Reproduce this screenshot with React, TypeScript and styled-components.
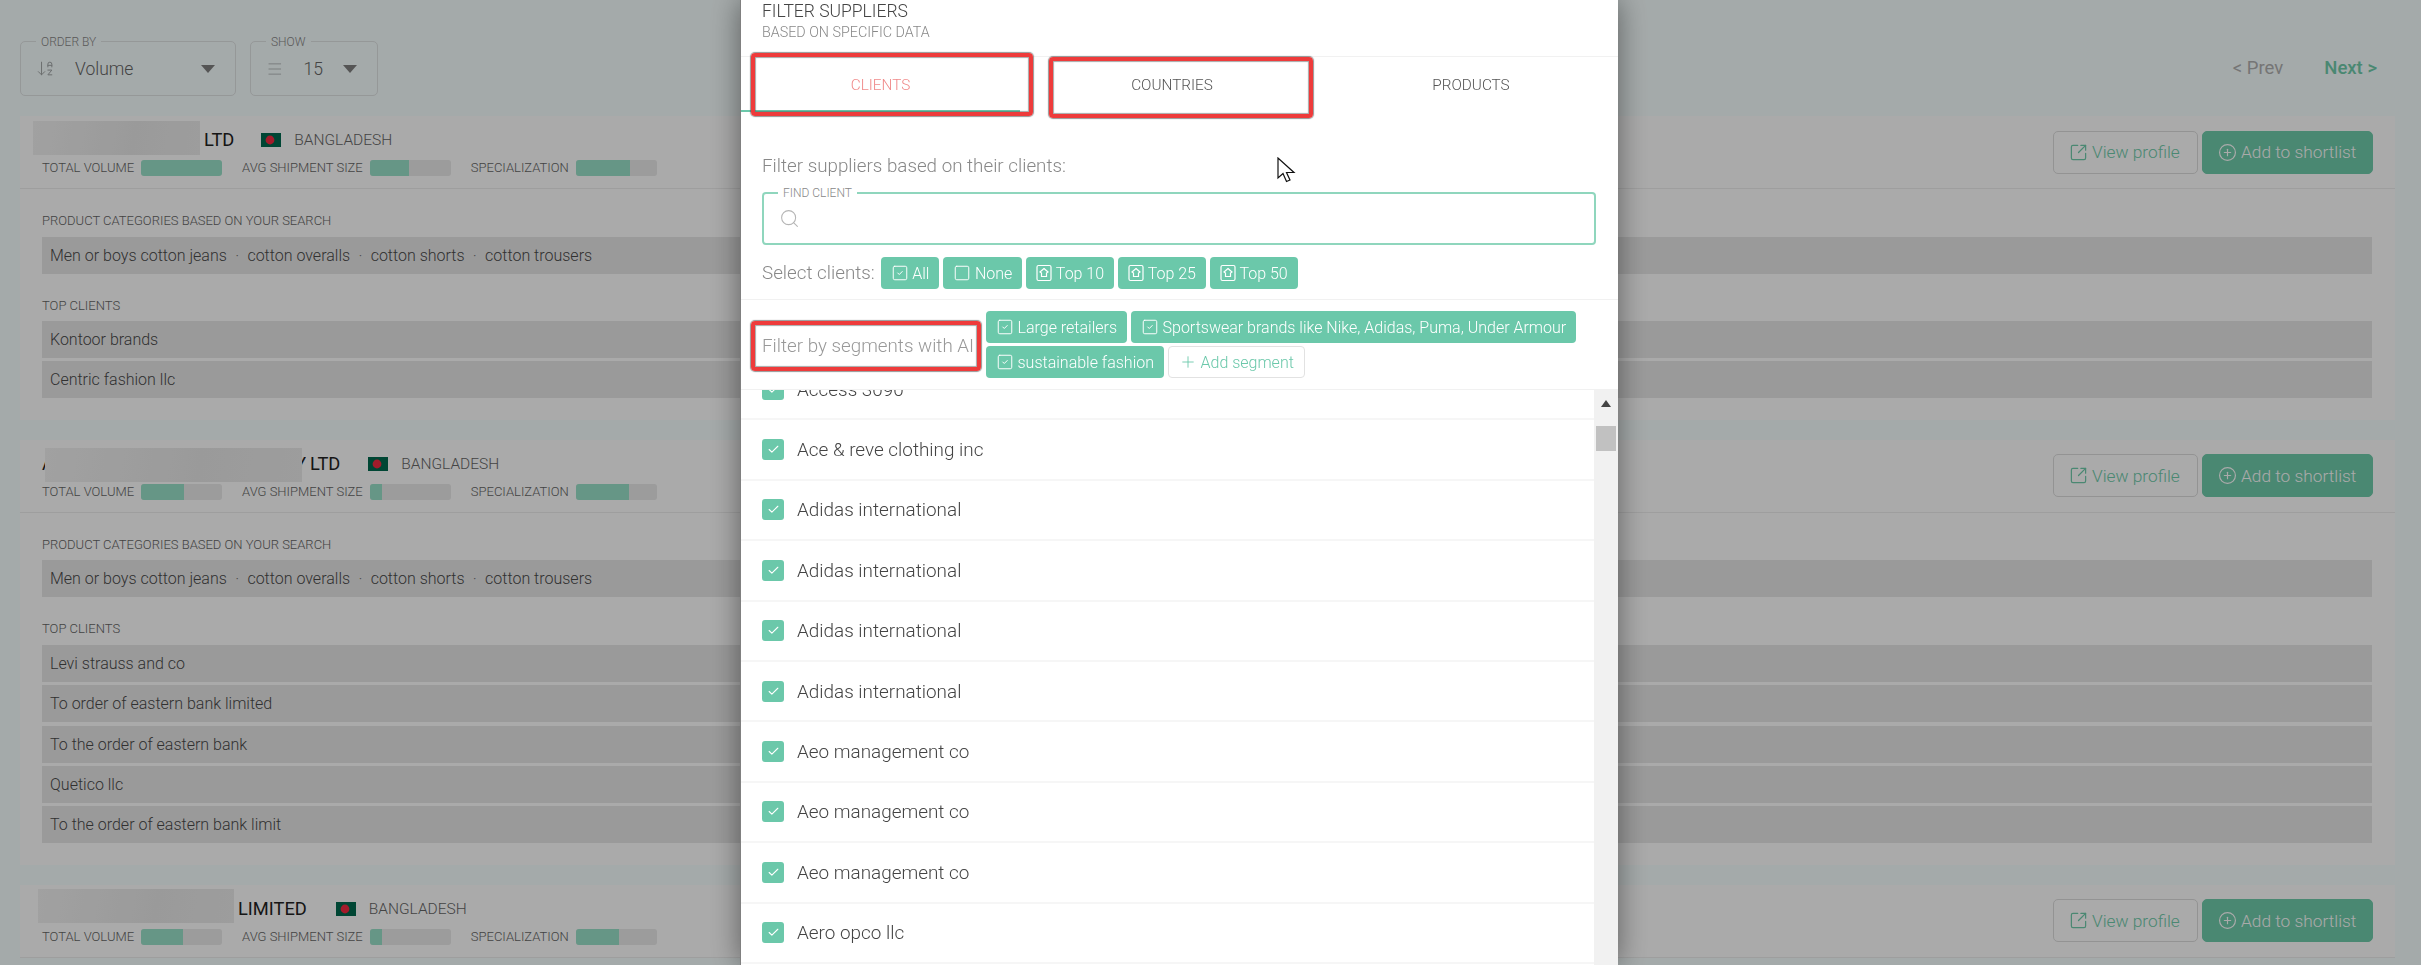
// App.tsx
import React from "react";
import styled, { createGlobalStyle } from "styled-components";
import { ArrowDownAZ, Check, CirclePlus, Menu, Plus, Search, Square, SquareArrowOutUpRight, SquareCheck } from "lucide-react";

interface supplierProps {
  blur: { left: number; width: number; top: number };
  before?: string;
  after?: string;
  suffix: string;
  gap: number;
  bars: number[];
  categories?: boolean;
  clients: string[];
}

const suppliers: supplierProps[] = [
  {
    blur: { left: 13, width: 167, top: -2 },
    suffix: "LTD",
    gap: 27,
    bars: [100, 48, 67],
    categories: true,
    clients: ["Kontoor brands", "Centric fashion llc"],
  },
  {
    blur: { left: 3, width: 257, top: 1 },
    before: "A",
    after: "Y",
    suffix: "LTD",
    gap: 28,
    bars: [53, 15, 66],
    categories: true,
    clients: [
      "Levi strauss and co",
      "To order of eastern bank limited",
      "To the order of eastern bank",
      "Quetico llc",
      "To the order of eastern bank limit",
    ],
  },
  {
    blur: { left: 18, width: 196, top: -3 },
    suffix: "LIMITED",
    gap: 29,
    bars: [52, 15, 53],
    clients: [],
  },
];

const metricNames = ["TOTAL VOLUME", "AVG SHIPMENT SIZE", "SPECIALIZATION"];
const clientList = [
  "Access 3090",
  "Ace & reve clothing inc",
  "Adidas international",
  "Adidas international",
  "Adidas international",
  "Adidas international",
  "Aeo management co",
  "Aeo management co",
  "Aeo management co",
  "Aero opco llc",
];

const TopIcon = () => (
  <svg width="16" height="18" viewBox="0 0 16 18" fill="none" stroke="currentColor" strokeWidth="1.2">
    <rect x="1" y="1.5" width="14" height="15" rx="1.5" />
    <path d="M8 4.5 L12 8 L10.5 9 V12.5 H5.5 V9 L4 8 Z" />
  </svg>
);

const Flag = () => (
  <svg width="20" height="14" viewBox="0 0 20 14">
    <rect width="20" height="14" fill="#006a4e" />
    <circle cx="9" cy="7" r="4.4" fill="#f42a41" />
  </svg>
);

const SupplierCard = ({ supplier }: { supplier: supplierProps }) => (
  <Card>
    <CardHeader>
      <div>
        <NameRow>
          <Redacted $left={supplier.before ? 0 : supplier.blur.left}>
            {supplier.before && <LeftGlyph>{supplier.before}</LeftGlyph>}
            <RedactBlock $width={supplier.blur.width} $top={supplier.blur.top} />
            {supplier.after && <RightGlyph>{supplier.after}</RightGlyph>}
          </Redacted>
          <CompanyName>{supplier.suffix}</CompanyName>
          <FlagWrap $gap={supplier.gap}>
            <Flag />
          </FlagWrap>
          <Country>BANGLADESH</Country>
        </NameRow>
        <MetricRow>
          {metricNames.map((name, index) => (
            <Metric key={name}>
              <MetricName>{name}</MetricName>
              <Bar>
                <BarFill style={{ width: `${supplier.bars[index]}%` }} />
              </Bar>
            </Metric>
          ))}
        </MetricRow>
      </div>
      <Actions>
        <OutlineButton>
          <SquareArrowOutUpRight size={19} strokeWidth={1.5} />
          View profile
        </OutlineButton>
        <PrimaryButton>
          <CirclePlus size={19} strokeWidth={1.5} />
          Add to shortlist
        </PrimaryButton>
      </Actions>
    </CardHeader>
    {supplier.categories && (
      <CardBody>
        <SectionLabel>PRODUCT CATEGORIES BASED ON YOUR SEARCH</SectionLabel>
        <GreyRow>
          Men or boys cotton jeans<Dot>·</Dot>cotton overalls<Dot>·</Dot>cotton shorts<Dot>·</Dot>cotton trousers
        </GreyRow>
        <SectionLabel $spaced>TOP CLIENTS</SectionLabel>
        {supplier.clients.map((client, index) => (
          <GreyRow key={index}>{client}</GreyRow>
        ))}
      </CardBody>
    )}
  </Card>
);

const App = () => {
  return (
    <>
      <GlobalStyle />
      <Page>
        <Toolbar>
          <Field $width={216}>
            <FieldLabel>ORDER BY</FieldLabel>
            <ArrowDownAZ size={19} strokeWidth={1.25} color="#a0a5a6" />
            <FieldValue $grow>Volume</FieldValue>
            <Caret />
          </Field>
          <Field $width={128}>
            <FieldLabel>SHOW</FieldLabel>
            <Menu size={20} strokeWidth={1} color="#a0a5a6" />
            <FieldValue>15</FieldValue>
            <Caret />
          </Field>
          <Pager>
            <PagerLink>&lt; Prev</PagerLink>
            <PagerLink $active>Next &gt;</PagerLink>
          </Pager>
        </Toolbar>
        {suppliers.map((supplier, index) => (
          <SupplierCard key={index} supplier={supplier} />
        ))}
      </Page>
      <Backdrop />
      <Modal>
        <ModalHead>
          <ModalTitle>FILTER SUPPLIERS</ModalTitle>
          <ModalSubtitle>BASED ON SPECIFIC DATA</ModalSubtitle>
        </ModalHead>
        <Tabs>
          <Tab $active>CLIENTS</Tab>
          <Tab>COUNTRIES</Tab>
          <Tab>PRODUCTS</Tab>
        </Tabs>
        <FilterPanel>
          <PanelText>Filter suppliers based on their clients:</PanelText>
          <SearchBox>
            <SearchLabel>FIND CLIENT</SearchLabel>
            <Search size={21} strokeWidth={1.2} color="#b5b5b5" />
          </SearchBox>
          <ChipRow>
            <PanelText>Select clients:</PanelText>
            <Chip>
              <SquareCheck size={18} strokeWidth={1.3} />
              All
            </Chip>
            <Chip>
              <Square size={18} strokeWidth={1.3} />
              None
            </Chip>
            <Chip>
              <TopIcon />
              Top 10
            </Chip>
            <Chip>
              <TopIcon />
              Top 25
            </Chip>
            <Chip>
              <TopIcon />
              Top 50
            </Chip>
          </ChipRow>
        </FilterPanel>
        <SegmentPanel>
          <SegmentLabel>Filter by segments with AI</SegmentLabel>
          <SegmentChips>
            <Chip>
              <SquareCheck size={18} strokeWidth={1.3} />
              Large retailers
            </Chip>
            <Chip>
              <SquareCheck size={18} strokeWidth={1.3} />
              Sportswear brands like Nike, Adidas, Puma, Under Armour
            </Chip>
            <Chip>
              <SquareCheck size={18} strokeWidth={1.3} />
              sustainable fashion
            </Chip>
            <GhostChip>
              <Plus size={18} strokeWidth={1.2} />
              Add segment
            </GhostChip>
          </SegmentChips>
        </SegmentPanel>
        <ListArea>
          <ListClip>
            <ListInner>
              {clientList.map((client, index) => (
                <ClientRow key={index}>
                  <CheckBox>
                    <Check size={13} strokeWidth={2} />
                  </CheckBox>
                  {client}
                </ClientRow>
              ))}
            </ListInner>
          </ListClip>
          <ScrollTrack>
            <ScrollArrow />
            <ScrollThumb />
          </ScrollTrack>
        </ListArea>
      </Modal>
      <RedBox $left={751} $top={53} $width={282} $height={63} />
      <RedBox $left={1049} $top={57} $width={264} $height={61} />
      <RedBox $left={751} $top={321} $width={230} $height={50} />
      <Cursor width="20" height="28" viewBox="0 0 20 28">
        <path d="M1 1 L1 21 L6 16.5 L9.5 24.5 L13 23 L9.5 15.5 L17 15.5 Z" fill="#fff" stroke="#111" strokeWidth="1.2" />
      </Cursor>
    </>
  );
};

export default App;

const GlobalStyle = createGlobalStyle`
  html, body {
    margin: 0;
    height: 965px;
    overflow: hidden;
    background: #f7ffff;
    font-family: Roboto, "Liberation Sans", sans-serif;
    font-weight: 300;
  }
  * {
    box-sizing: border-box;
  }
`;

const Page = styled.div`
  padding: 41px 26px 0 20px;
  height: 965px;
  overflow: hidden;
`;

const Toolbar = styled.div`
  display: flex;
  gap: 14px;
  height: 55px;
  margin-bottom: 20px;
`;

const Field = styled.div<{ $width: number }>`
  position: relative;
  display: flex;
  align-items: center;
  gap: 20px;
  width: ${(props) => props.$width}px;
  padding: 0 20px 0 15px;
  border: 1px solid #e0e4e5;
  border-radius: 5px;
`;

const FieldLabel = styled.span`
  position: absolute;
  top: -7px;
  left: 15px;
  padding: 0 5px;
  background: #f7ffff;
  font-size: 12px;
  line-height: 14px;
  color: #888;
`;

const FieldValue = styled.span<{ $grow?: boolean }>`
  flex: ${(props) => (props.$grow ? 1 : "none")};
  font-size: 17.5px;
  color: #666;
`;

const Caret = styled.span`
  width: 0;
  height: 0;
  border-left: 7px solid transparent;
  border-right: 7px solid transparent;
  border-top: 8px solid #808080;
`;

const Pager = styled.div`
  display: flex;
  gap: 41px;
  margin-left: auto;
  padding: 16px 18px 0 0;
`;

const PagerLink = styled.span<{ $active?: boolean }>`
  font-size: 18.5px;
  line-height: 22px;
  font-weight: ${(props) => (props.$active ? 500 : 400)};
  color: ${(props) => (props.$active ? "#6fccab" : "#b0b0b0")};
`;

const Card = styled.section`
  background: #fff;
  margin-bottom: 20px;
`;

const CardHeader = styled.header`
  display: flex;
  justify-content: space-between;
  align-items: center;
  height: 73px;
  padding: 12px 22px 12px 0;
  border-bottom: 1px solid #eee;
`;

const NameRow = styled.div`
  display: flex;
  align-items: center;
  height: 24px;
`;

const Redacted = styled.div<{ $left: number }>`
  display: flex;
  align-items: center;
  height: 24px;
  margin-left: ${(props) => props.$left}px;
  margin-right: 4px;
  font-size: 18px;
  font-weight: 400;
  color: #222;
`;

const RedactBlock = styled.div<{ $width: number; $top: number }>`
  flex: none;
  width: ${(props) => props.$width}px;
  height: 34px;
  margin-top: ${(props) => props.$top * 2}px;
  background: linear-gradient(100deg, #f2f2f2, #e8e8e8 60%, #ececec);
`;

const LeftGlyph = styled.span`
  width: 25px;
  height: 24px;
  padding-left: 22px;
  line-height: 24px;
  overflow: hidden;
  white-space: nowrap;
`;

const RightGlyph = styled.span`
  display: flex;
  justify-content: flex-end;
  width: 4px;
  height: 24px;
  line-height: 24px;
  overflow: hidden;
`;

const CompanyName = styled.span`
  font-size: 18.3px;
  font-weight: 400;
  line-height: 24px;
  color: #222;
`;

const FlagWrap = styled.span<{ $gap: number }>`
  display: flex;
  margin-left: ${(props) => props.$gap}px;
  margin-right: 13px;
`;

const Country = styled.span`
  font-size: 15.5px;
  color: #666;
`;

const MetricRow = styled.div`
  display: flex;
  gap: 20px;
  margin-top: 8px;
  padding-left: 22px;
`;

const Metric = styled.div`
  display: flex;
  align-items: center;
  gap: 7px;
`;

const MetricName = styled.span`
  font-size: 13px;
  line-height: 16px;
  color: #666;
`;

const Bar = styled.div`
  width: 81px;
  height: 16px;
  border-radius: 3px;
  overflow: hidden;
  background: #eaeaea;
`;

const BarFill = styled.div`
  height: 100%;
  background: #99e1c9;
`;

const Actions = styled.div`
  display: flex;
  gap: 4px;
`;

const OutlineButton = styled.button`
  display: flex;
  align-items: center;
  gap: 4px;
  width: 145px;
  height: 43px;
  padding: 0 0 0 15px;
  border: 1px solid #ddd;
  border-radius: 5px;
  background: #fff;
  color: #6fccab;
  font: 300 17.3px Roboto, sans-serif;
`;

const PrimaryButton = styled(OutlineButton)`
  width: 171px;
  border-color: #6fccab;
  background: #6fccab;
  color: #fff;
`;

const CardBody = styled.div`
  padding: 24px 23px 18px 22px;
`;

const SectionLabel = styled.div<{ $spaced?: boolean }>`
  margin: ${(props) => (props.$spaced ? "24px" : "0")} 0 7.5px;
  font-size: 13px;
  line-height: 16px;
  color: #666;
`;

const GreyRow = styled.div`
  display: flex;
  align-items: center;
  height: 37px;
  margin-bottom: 3.4px;
  padding-left: 8px;
  background: #e8e8e8;
  font-size: 16px;
  color: #4a4a4a;
`;

const Dot = styled.span`
  margin: 0 8.3px;
  color: #777;
`;

const Backdrop = styled.div`
  position: fixed;
  inset: 0;
  background: rgba(0, 0, 0, 0.333);
`;

const Modal = styled.div`
  position: fixed;
  top: 0;
  left: 740px;
  display: flex;
  flex-direction: column;
  width: 878px;
  height: 965px;
  overflow: hidden;
  background: #fff;
  border-left: 1px solid #808080;
  box-shadow: 0 0 28px rgba(0, 0, 0, 0.45);
`;

const ModalHead = styled.div`
  height: 57px;
  padding: 2px 21px 0;
  border-bottom: 1px solid #f1f1f1;
`;

const ModalTitle = styled.div`
  font-size: 17.5px;
  line-height: 18px;
  color: #444;
`;

const ModalSubtitle = styled.div`
  margin-top: 4px;
  font-size: 14.3px;
  line-height: 16px;
  color: #888;
`;

const Tabs = styled.div`
  display: grid;
  grid-template-columns: 279px 304px 1fr;
  height: 55px;
`;

const Tab = styled.div<{ $active?: boolean }>`
  display: flex;
  justify-content: center;
  align-items: center;
  padding-top: 3px;
  border-bottom: 2px solid ${(props) => (props.$active ? "#6bc8aa" : "transparent")};
  font-size: 15.3px;
  color: ${(props) => (props.$active ? "#f08a8a" : "#555")};
`;

const FilterPanel = styled.div`
  height: 188px;
  padding: 44px 22px 0 21px;
  border-bottom: 1px solid #f1f1f1;
`;

const PanelText = styled.div`
  font-size: 18.8px;
  line-height: 20px;
  color: #888;
`;

const SearchBox = styled.div`
  position: relative;
  display: flex;
  align-items: center;
  height: 53px;
  margin-top: 16px;
  padding-left: 15px;
  border: 2px solid #8fd6bd;
  border-radius: 4px;
`;

const SearchLabel = styled.span`
  position: absolute;
  top: -8px;
  left: 14px;
  padding: 0 5px;
  background: #fff;
  font-size: 12px;
  line-height: 14px;
  color: #888;
`;

const ChipRow = styled.div`
  display: flex;
  align-items: center;
  gap: 4px;
  margin-top: 12px;

  & > :first-child {
    margin-right: 2px;
  }
`;

const Chip = styled.span`
  display: inline-flex;
  align-items: center;
  gap: 3.5px;
  height: 32px;
  padding: 0 10px;
  border-radius: 4px;
  background: #6bc8aa;
  color: #fff;
  font-size: 16px;
  white-space: nowrap;
`;

const GhostChip = styled(Chip)`
  border: 1px solid #e2e2e2;
  background: #fff;
  color: #6bc8aa;
`;

const SegmentPanel = styled.div`
  display: flex;
  align-items: center;
  height: 90px;
  padding-left: 21px;
  border-bottom: 1px solid #f1f1f1;
`;

const SegmentLabel = styled.div`
  flex: none;
  width: 224px;
  padding-top: 2px;
  font-size: 18.8px;
  color: #999;
  white-space: nowrap;
  overflow: hidden;
`;

const SegmentChips = styled.div`
  display: flex;
  flex-wrap: wrap;
  align-content: center;
  gap: 3px 4px;
  width: 620px;
`;

const ListArea = styled.div`
  flex: 1;
  display: flex;
  min-height: 0;
`;

const ListClip = styled.div`
  flex: 1;
  overflow: hidden;
`;

const ListInner = styled.div`
  margin-top: -30px;
`;

const ClientRow = styled.div`
  display: flex;
  align-items: center;
  gap: 13px;
  height: 60.4px;
  padding-left: 21px;
  border-bottom: 2px solid #f6f6f6;
  font-size: 18.9px;
  color: #444;
`;

const CheckBox = styled.span`
  display: flex;
  justify-content: center;
  align-items: center;
  width: 22px;
  height: 21px;
  border-radius: 3px;
  background: #6bc8aa;
  color: #fff;
`;

const ScrollTrack = styled.div`
  flex: none;
  width: 24px;
  padding-top: 10px;
  background: #f1f1f1;
`;

const ScrollArrow = styled.div`
  width: 0;
  height: 0;
  margin: 0 auto;
  border-left: 5.5px solid transparent;
  border-right: 5.5px solid transparent;
  border-bottom: 7px solid #444;
`;

const ScrollThumb = styled.div`
  width: 20px;
  height: 25px;
  margin: 19px auto 0;
  background: #c1c1c1;
`;

const RedBox = styled.div<{ $left: number; $top: number; $width: number; $height: number }>`
  position: fixed;
  left: ${(props) => props.$left}px;
  top: ${(props) => props.$top}px;
  width: ${(props) => props.$width}px;
  height: ${(props) => props.$height}px;
  border: 4px solid #ee3b3b;
  border-radius: 4px;
  box-shadow: 0 0 1px 1px rgba(80, 80, 80, 0.6), inset 0 0 1px 1px rgba(80, 80, 80, 0.5);
`;

const Cursor = styled.svg`
  position: fixed;
  left: 1277px;
  top: 157px;
`;
